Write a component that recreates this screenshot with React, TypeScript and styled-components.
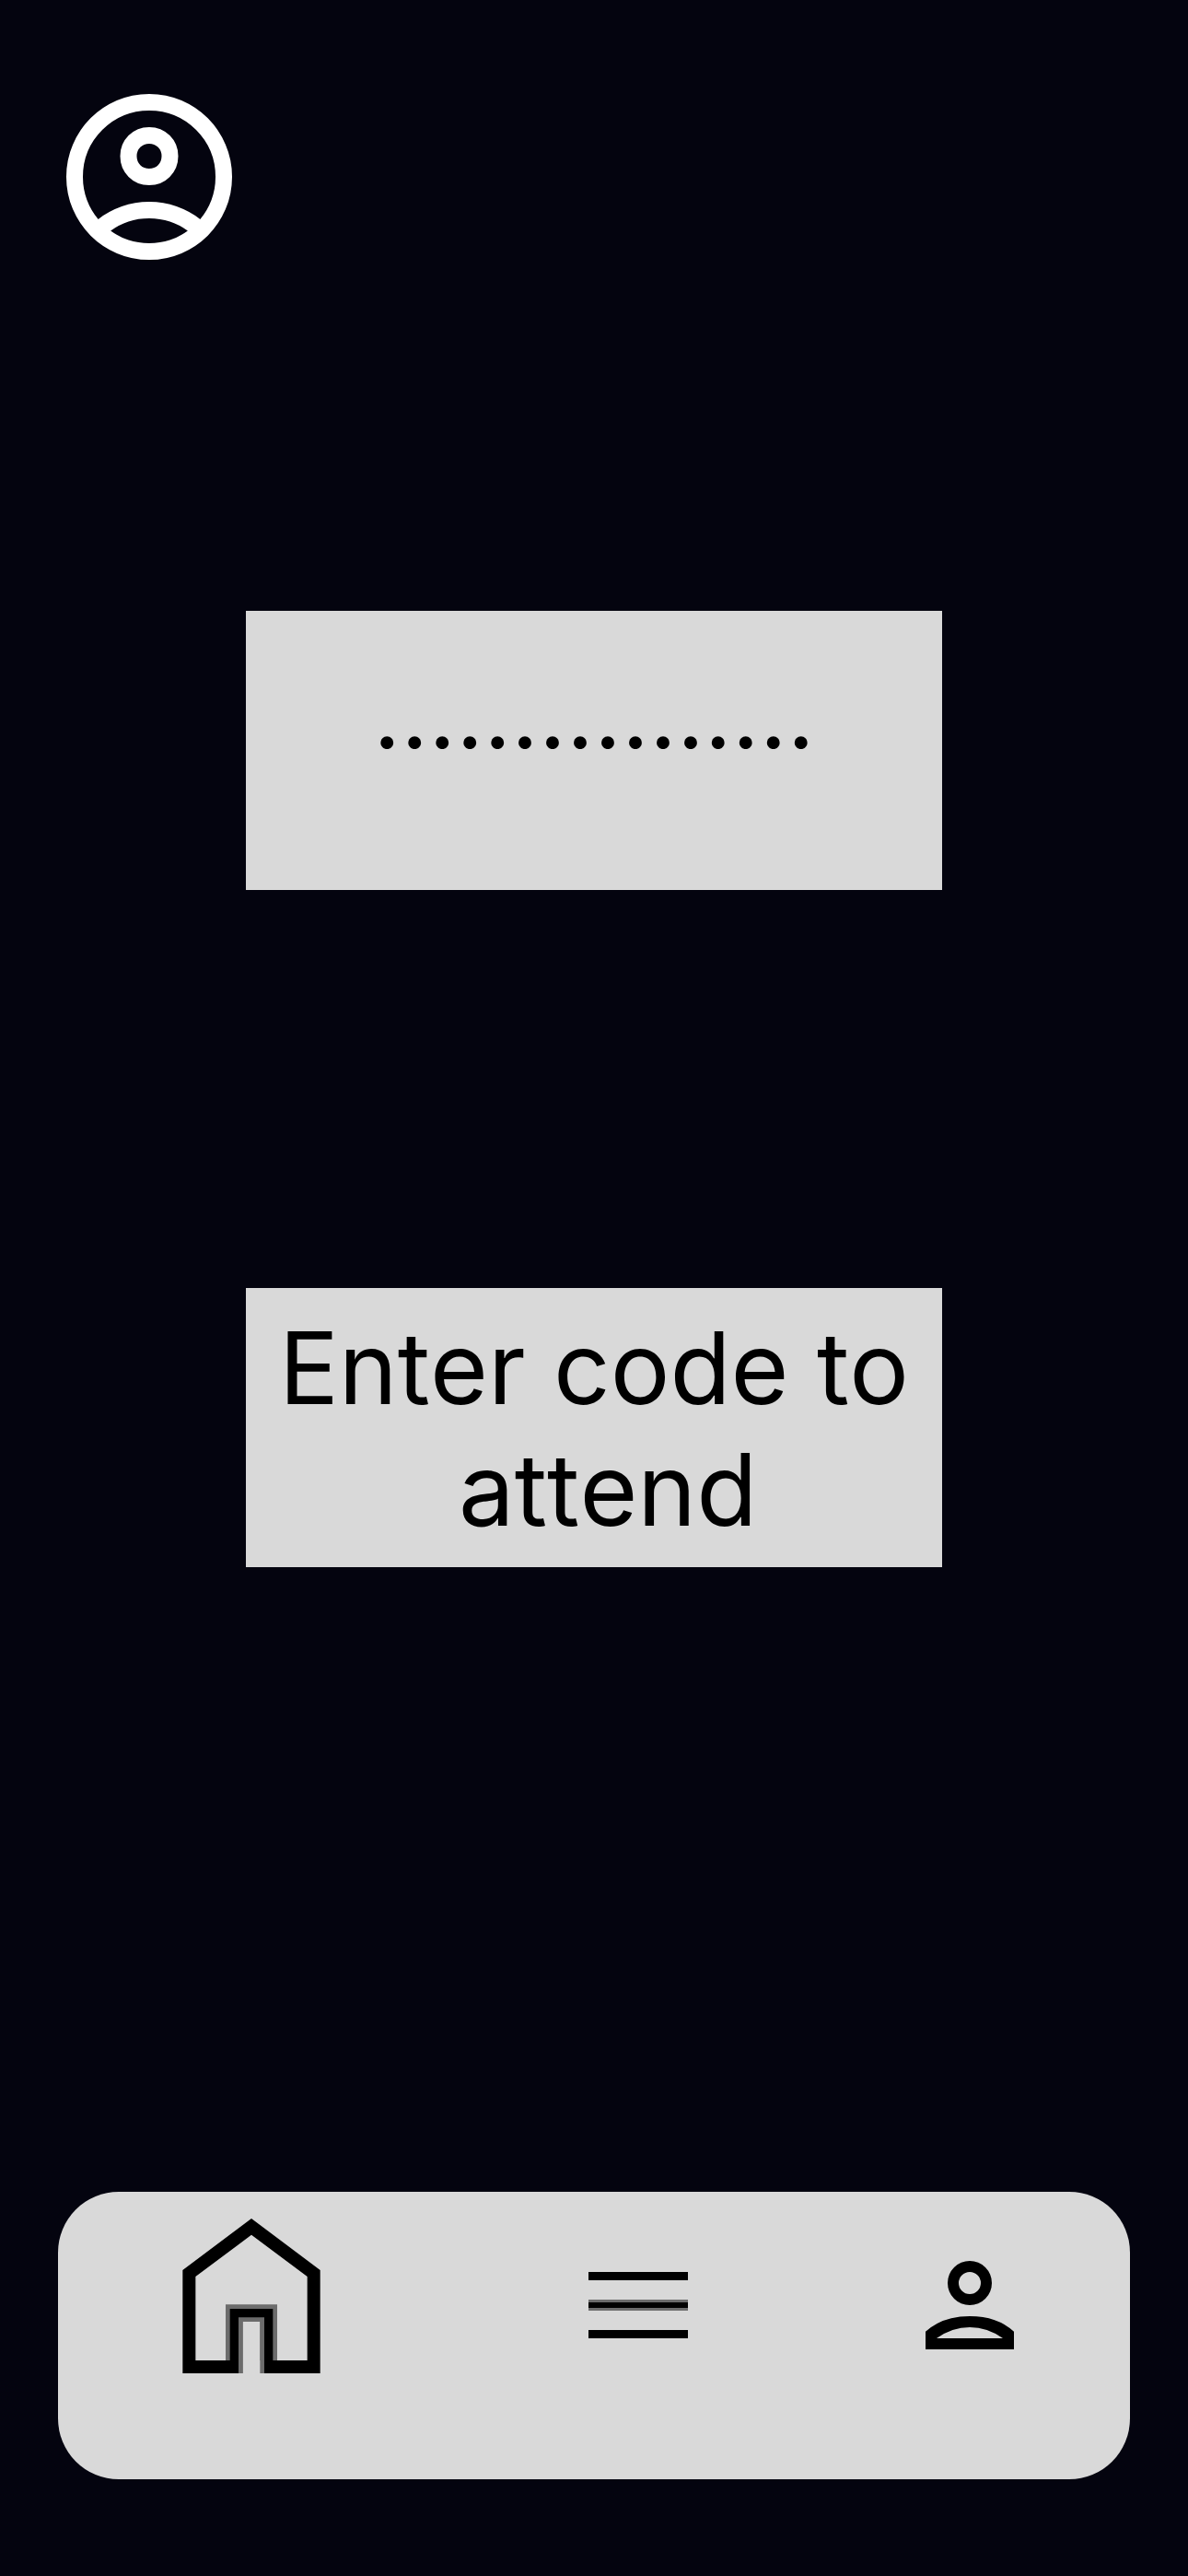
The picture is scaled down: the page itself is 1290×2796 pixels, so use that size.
import { useState } from "react";
import styled, { createGlobalStyle } from "styled-components";

const colors = {
  night: "#04040f",
  panel: "#d9d9d9",
  ink: "#000000",
  softInk: "#6c6c6c",
  light: "#ffffff",
};

const GlobalStyle = createGlobalStyle`
  *, *::before, *::after { box-sizing: border-box; }
  body { margin: 0; background: ${colors.night}; }
  button, input {
    font: inherit;
    font-kerning: inherit;
    color: inherit;
    border: 0;
    border-radius: 0;
    margin: 0;
  }
`;

const Screen = styled.div`
  display: flex;
  flex-direction: column;
  min-height: 100vh;
  background: ${colors.night};
  color: ${colors.ink};
  font-family: Inter, "Liberation Sans", sans-serif;
  font-kerning: none;
  font-size: 108px;
  line-height: 132px;
`;

const Header = styled.header`
  display: flex;
  padding: 84px 54px 0;
`;

const IconButton = styled.button`
  display: flex;
  padding: 0;
  background: none;
  cursor: pointer;
`;

const Icon = styled.svg<{ $size: number }>`
  display: block;
  width: ${({ $size }) => $size}px;
  height: ${({ $size }) => $size}px;
`;

const AttendForm = styled.form`
  display: flex;
  flex-direction: column;
  gap: 432px;
  width: 100%;
  max-width: 756px;
  margin: 0 auto;
  padding: 363px 0;
`;

const CodeInput = styled.input`
  width: 100%;
  padding: 45px 24px 126px;
  height: 303px;
  background: ${colors.panel};
  font-size: 104px;
  text-align: center;
  outline: none;
`;

const SubmitButton = styled.button`
  width: 100%;
  min-height: 303px;
  padding: 20px 0 18px;
  background: ${colors.panel};
  text-align: center;
  cursor: pointer;
`;

const NavBar = styled.nav`
  display: grid;
  grid-template-columns: 7fr 7fr 5fr;
  margin: auto 63px 105px;
  padding: 1px 24px 67px 0;
  border-radius: 66px;
  background: ${colors.panel};
`;

const NavLink = styled.a<{ $align: "start" | "center" }>`
  display: flex;
  justify-content: center;
  align-items: ${({ $align }) => $align};
  height: 244px;
  color: ${colors.ink};
`;

const AccountIcon = () => (
  <Icon $size={216} viewBox="0 0 24 24" fill={colors.light} aria-hidden="true">
    <path d="M5.85 17.1q1.275-.975 2.85-1.537T12 15t3.3.563t2.85 1.537q.875-1.025 1.363-2.325T20 12q0-3.325-2.337-5.663T12 4T6.337 6.338T4 12q0 1.475.488 2.775T5.85 17.1M12 13q-1.475 0-2.488-1.012T8.5 9.5t1.013-2.488T12 6t2.488 1.013T15.5 9.5t-1.012 2.488T12 13m0 9q-2.075 0-3.9-.788t-3.175-2.137T2.788 15.9T2 12t.788-3.9t2.137-3.175T8.1 2.788T12 2t3.9.788t3.175 2.137T21.213 8.1T22 12t-.788 3.9t-2.137 3.175t-3.175 2.138T12 22m0-2q1.325 0 2.5-.387t2.15-1.113q-.975-.725-2.15-1.112T12 17t-2.5.388T7.35 18.5q.975.725 2.15 1.113T12 20m0-9q.65 0 1.075-.425T13.5 9.5t-.425-1.075T12 8t-1.075.425T10.5 9.5t.425 1.075T12 11" />
  </Icon>
);

const HomeIcon = () => (
  <Icon $size={224} viewBox="0 0 24 24" aria-hidden="true">
    <path d="M9 19.5V13h6v6.5h-2V21v-6h-2v6h-.5v-1.5z" fill={colors.softInk} />
    <path d="M10.5 15h.5v6h-.5zM13 15h.5v6H13z" fill={colors.softInk} />
    <path
      d="M4 21V9l8-6l8 6v12h-6.5v-6.5h-3V21zM5.5 19.5h4v-6h5v6h4V9.75L12 4.9L5.5 9.75z"
      fill={colors.ink}
      fillRule="evenodd"
    />
  </Icon>
);

const MenuIcon = () => (
  <Icon $size={144} viewBox="0 0 144 144" aria-hidden="true">
    <path d="M18 36h108v9H18zM18 69h108v6H18zM18 99h108v9H18z" fill={colors.ink} />
    <path d="M18 66h108v3H18zM18 75h108v3H18z" fill={colors.softInk} />
  </Icon>
);

const PersonIcon = () => (
  <Icon $size={144} viewBox="0 0 24 24" fill={colors.ink} fillRule="evenodd" aria-hidden="true">
    <path d="M12 4a4 4 0 1 1 0 8a4 4 0 0 1 0-8M12 6a2 2 0 1 0 0 4a2 2 0 0 0 0-4" />
    <path d="M4 20v-3.2q3-2.8 8-2.8t8 2.8V20zM6 18h12q-2.8-2-6-2t-6 2" />
  </Icon>
);

export default function App() {
  const [code, setCode] = useState("................");

  return (
    <Screen>
      <GlobalStyle />
      <Header>
        <IconButton type="button" aria-label="Account">
          <AccountIcon />
        </IconButton>
      </Header>
      <AttendForm onSubmit={(event) => event.preventDefault()}>
        <CodeInput
          type="text"
          aria-label="Attendance code"
          value={code}
          onChange={(event) => setCode(event.target.value)}
        />
        <SubmitButton type="submit">
          Enter code to
          <br />
          &nbsp;attend
        </SubmitButton>
      </AttendForm>
      <NavBar aria-label="Main">
        <NavLink href="#home" aria-label="Home" $align="start">
          <HomeIcon />
        </NavLink>
        <NavLink href="#menu" aria-label="Menu" $align="center">
          <MenuIcon />
        </NavLink>
        <NavLink href="#profile" aria-label="Profile" $align="center">
          <PersonIcon />
        </NavLink>
      </NavBar>
    </Screen>
  );
}
